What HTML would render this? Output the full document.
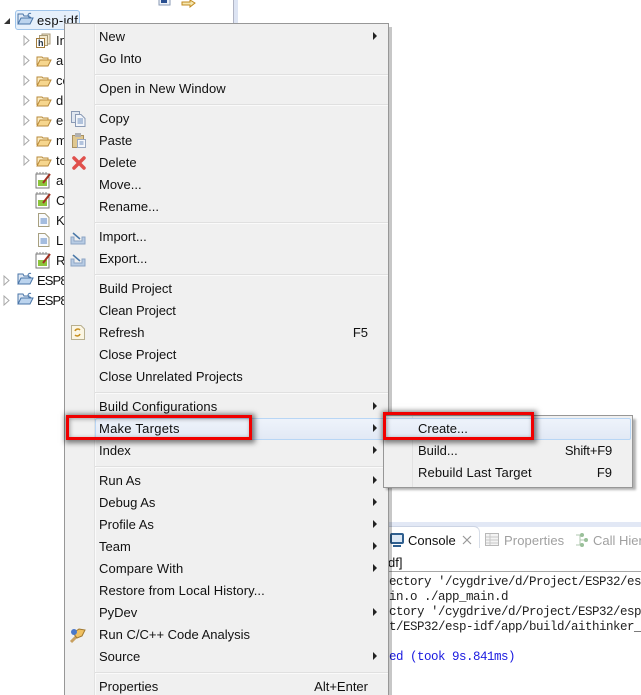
<!DOCTYPE html>
<html><head><meta charset="utf-8"><style>
html,body{margin:0;padding:0;background:#fff}
#p{position:relative;width:641px;height:695px;overflow:hidden;background:#fff;font-family:"Liberation Sans",sans-serif;font-size:13px;color:#111}
#p div,#p svg{position:absolute}
.t{white-space:nowrap;line-height:16px;height:16px;margin-top:1px}
.m{left:99px}
.s{left:95px;width:293px;height:1px;background:#e0e0e0;border-bottom:1px solid #fafafa}
.a{left:373px;width:0;height:0;border-left:4px solid #222;border-top:4px solid transparent;border-bottom:4px solid transparent}
.k{white-space:nowrap;line-height:16px;height:16px;text-align:right;margin-top:1px}
.r{border:3px solid #f00000;box-shadow:1px 1px 5px 2px rgba(0,0,0,.5),inset 1px 1px 4px rgba(0,0,0,.35);box-sizing:border-box}
.c{font-family:"Liberation Mono",monospace;font-size:12.5px;letter-spacing:-.5px;line-height:15px;white-space:nowrap;color:#222}
</style></head><body><div id="p">

<div style="left:233px;top:0;width:1px;height:24px;background:#b0b4c4"></div>
<div style="left:234px;top:0;width:4px;height:24px;background:#dde4f3"></div>

<svg style="left:158px;top:0" width="14" height="6"><path d="M1 0V5H12V0" fill="#eef2f8" stroke="#8a9ab5"/><rect x="3" y="0" width="6" height="3" fill="#2a4f90"/></svg>
<svg style="left:181px;top:0" width="16" height="8"><path d="M1 2H9V0L14 3 9 7V5H1Z" fill="#f5e7b0" stroke="#c08a20"/></svg>

<div style="left:15px;top:10px;width:65px;height:20px;box-sizing:border-box;border:1px solid #9fc4ea;border-radius:3px;background:#e6f0fb"></div>
<svg style="left:3px;top:17px" width="8" height="8"><path d="M1 7H7V1Z" fill="#333"/></svg>
<svg style="left:17px;top:11px" width="17" height="15"><path d="M1 13V3H6L7 5H12V7" fill="#dfe8f4" stroke="#4a76a8"/><path d="M1 13L4 7H16L13 13Z" fill="#bcd4ee" stroke="#4a76a8"/><path d="M14 2.500A2 2 0 1 0 14 6" fill="none" stroke="#4a76a8"/></svg>
<div class="t" style="left:37px;top:12px;letter-spacing:.3px">esp-idf</div>

<svg style="left:23px;top:35px" width="7" height="11"><path d="M1 1L6 5.500 1 10Z" fill="#fff" stroke="#a8a8a8"/></svg>
<svg style="left:36px;top:33px" width="16" height="15"><rect x="6" y="1" width="8" height="10" fill="#f3e8cd" stroke="#a89a78"/><rect x="3.500" y="2.500" width="8" height="10" fill="#f3e8cd" stroke="#a89a78"/><rect x="0.500" y="5.500" width="8" height="9" fill="#fff" stroke="#a07a3a"/><text x="2" y="13" font-size="9" font-weight="bold" font-family="Liberation Sans" fill="#234">h</text></svg>
<div class="t" style="left:56px;top:32px">In</div>

<svg style="left:23px;top:55px" width="7" height="11"><path d="M1 1L6 5.500 1 10Z" fill="#fff" stroke="#a8a8a8"/></svg>
<svg style="left:36px;top:55px" width="16" height="12"><path d="M1 10V2H6L7 3H12V5" fill="#fbeec8" stroke="#b98a3a"/><path d="M1 11L4 5H15L12 11Z" fill="#f6d68e" stroke="#b98a3a"/></svg>
<div class="t" style="left:56px;top:52px">a</div>
<svg style="left:23px;top:75px" width="7" height="11"><path d="M1 1L6 5.500 1 10Z" fill="#fff" stroke="#a8a8a8"/></svg>
<svg style="left:36px;top:75px" width="16" height="12"><path d="M1 10V2H6L7 3H12V5" fill="#fbeec8" stroke="#b98a3a"/><path d="M1 11L4 5H15L12 11Z" fill="#f6d68e" stroke="#b98a3a"/></svg>
<div class="t" style="left:56px;top:72px">co</div>
<svg style="left:23px;top:95px" width="7" height="11"><path d="M1 1L6 5.500 1 10Z" fill="#fff" stroke="#a8a8a8"/></svg>
<svg style="left:36px;top:95px" width="16" height="12"><path d="M1 10V2H6L7 3H12V5" fill="#fbeec8" stroke="#b98a3a"/><path d="M1 11L4 5H15L12 11Z" fill="#f6d68e" stroke="#b98a3a"/></svg>
<div class="t" style="left:56px;top:92px">d</div>
<svg style="left:23px;top:115px" width="7" height="11"><path d="M1 1L6 5.500 1 10Z" fill="#fff" stroke="#a8a8a8"/></svg>
<svg style="left:36px;top:115px" width="16" height="12"><path d="M1 10V2H6L7 3H12V5" fill="#fbeec8" stroke="#b98a3a"/><path d="M1 11L4 5H15L12 11Z" fill="#f6d68e" stroke="#b98a3a"/></svg>
<div class="t" style="left:56px;top:112px">e</div>
<svg style="left:23px;top:135px" width="7" height="11"><path d="M1 1L6 5.500 1 10Z" fill="#fff" stroke="#a8a8a8"/></svg>
<svg style="left:36px;top:135px" width="16" height="12"><path d="M1 10V2H6L7 3H12V5" fill="#fbeec8" stroke="#b98a3a"/><path d="M1 11L4 5H15L12 11Z" fill="#f6d68e" stroke="#b98a3a"/></svg>
<div class="t" style="left:56px;top:132px">m</div>
<svg style="left:23px;top:155px" width="7" height="11"><path d="M1 1L6 5.500 1 10Z" fill="#fff" stroke="#a8a8a8"/></svg>
<svg style="left:36px;top:155px" width="16" height="12"><path d="M1 10V2H6L7 3H12V5" fill="#fbeec8" stroke="#b98a3a"/><path d="M1 11L4 5H15L12 11Z" fill="#f6d68e" stroke="#b98a3a"/></svg>
<div class="t" style="left:56px;top:152px">to</div>

<svg style="left:35px;top:172px" width="17" height="17"><rect x="1" y="2" width="13" height="14" fill="#fff" stroke="#777"/><path d="M2 2V0M5 2V0M8 2V0M11 2V0" stroke="#888"/><rect x="3" y="8" width="9" height="6" fill="#8cc43c"/><path d="M8 11L15 2" stroke="#a03020" stroke-width="2"/></svg>
<div class="t" style="left:56px;top:172px">a</div>
<svg style="left:35px;top:192px" width="17" height="17"><rect x="1" y="2" width="13" height="14" fill="#fff" stroke="#777"/><path d="M2 2V0M5 2V0M8 2V0M11 2V0" stroke="#888"/><rect x="3" y="8" width="9" height="6" fill="#8cc43c"/><path d="M8 11L15 2" stroke="#a03020" stroke-width="2"/></svg>
<div class="t" style="left:56px;top:192px">C</div>
<svg style="left:38px;top:213px" width="12" height="14"><path d="M.5.500H7L11 4.500V13.500H.5Z" fill="#f8fafd" stroke="#a8a080"/><path d="M2.500 6H9M2.500 8H9M2.500 10H9" stroke="#4f7fc0"/></svg>
<div class="t" style="left:56px;top:212px">K</div>
<svg style="left:38px;top:233px" width="12" height="14"><path d="M.5.500H7L11 4.500V13.500H.5Z" fill="#f8fafd" stroke="#a8a080"/><path d="M2.500 6H9M2.500 8H9M2.500 10H9" stroke="#4f7fc0"/></svg>
<div class="t" style="left:56px;top:232px">LI</div>
<svg style="left:35px;top:252px" width="17" height="17"><rect x="1" y="2" width="13" height="14" fill="#fff" stroke="#777"/><path d="M2 2V0M5 2V0M8 2V0M11 2V0" stroke="#888"/><rect x="3" y="8" width="9" height="6" fill="#8cc43c"/><path d="M8 11L15 2" stroke="#a03020" stroke-width="2"/></svg>
<div class="t" style="left:56px;top:252px">R</div>

<svg style="left:3px;top:275px" width="7" height="11"><path d="M1 1L6 5.500 1 10Z" fill="#fff" stroke="#a8a8a8"/></svg>
<svg style="left:17px;top:271px" width="17" height="15"><path d="M1 13V3H6L7 5H12V7" fill="#dfe8f4" stroke="#4a76a8"/><path d="M1 13L4 7H16L13 13Z" fill="#bcd4ee" stroke="#4a76a8"/><path d="M14 2.500A2 2 0 1 0 14 6" fill="none" stroke="#4a76a8"/></svg>
<div class="t" style="left:37px;top:272px;letter-spacing:-.9px">ESP8</div>
<svg style="left:3px;top:295px" width="7" height="11"><path d="M1 1L6 5.500 1 10Z" fill="#fff" stroke="#a8a8a8"/></svg>
<svg style="left:17px;top:291px" width="17" height="15"><path d="M1 13V3H6L7 5H12V7" fill="#dfe8f4" stroke="#4a76a8"/><path d="M1 13L4 7H16L13 13Z" fill="#bcd4ee" stroke="#4a76a8"/><path d="M14 2.500A2 2 0 1 0 14 6" fill="none" stroke="#4a76a8"/></svg>
<div class="t" style="left:37px;top:292px;letter-spacing:-.9px">ESP8</div>

<!-- console -->
<div style="left:388px;top:522px;width:253px;height:5px;background:#e2e8f5"></div>
<div style="left:388px;top:526px;width:92px;height:22px;background:#fff;border-top-right-radius:6px;box-sizing:border-box;border-top:1px solid #ccd4e4;border-right:1px solid #d8dee8"></div>
<svg style="left:390px;top:533px" width="14" height="14"><rect x="1" y="1" width="12" height="9" rx="1" fill="#dce8f5" stroke="#2f5f8f" stroke-width="2"/><path d="M3 13H11" stroke="#2f5f8f" stroke-width="2"/></svg>
<div class="t" style="left:408px;top:532px">Console</div>
<svg style="left:462px;top:535px" width="10" height="10"><path d="M1 1L9 9M9 1L1 9" stroke="#999" stroke-width="1.200" fill="none"/></svg>
<svg style="left:485px;top:533px" width="14" height="13"><rect x=".5" y=".5" width="13" height="12" fill="#f4f4f4" stroke="#b8b8b8"/><path d="M1 4H13M1 7H13M1 10H13M5 1V12" stroke="#c8c8c8"/></svg>
<div class="t" style="left:504px;top:532px;color:#a0a0a0;letter-spacing:.1px">Properties</div>
<svg style="left:573px;top:532px" width="16" height="16"><path d="M3 3H9M3 13H9M7 3V13M7 8H13" stroke="#b0c8b0" fill="none"/><circle cx="13" cy="8" r="2" fill="#9ac09a"/><circle cx="9" cy="3" r="2" fill="#9ac09a"/><circle cx="9" cy="13" r="2" fill="#9ac09a"/></svg>
<div class="t" style="left:593px;top:532px;color:#a0a0a0">Call Hier</div>
<div class="t" style="left:388px;top:554px;color:#111">df]</div>
<div style="left:388px;top:571px;width:253px;height:1px;background:#a8a8a8"></div>
<div class="c" style="left:389px;top:575px">ectory '/cygdrive/d/Project/ESP32/esp</div>
<div class="c" style="left:389px;top:590px">in.o ./app_main.d</div>
<div class="c" style="left:389px;top:605px">ctory '/cygdrive/d/Project/ESP32/esp</div>
<div class="c" style="left:389px;top:620px">t/ESP32/esp-idf/app/build/aithinker_</div>
<div class="c" style="left:389px;top:650px;color:#1a1ae0">ed (took 9s.841ms)</div>

<!-- main menu -->
<div style="left:389px;top:27px;width:3px;height:668px;background:rgba(0,0,0,.22)"></div>
<div style="left:64px;top:23px;width:325px;height:672px;box-sizing:border-box;border:1px solid #979797;border-bottom:0;background:#f0f0f0"></div>
<div style="left:94px;top:24px;width:1px;height:671px;background:#e2e2e2"></div>
<div style="left:95px;top:24px;width:1px;height:671px;background:#fafafa"></div>

<div class="t m" style="top:28px">New</div><div class="a" style="top:32px"></div>
<div class="t m" style="top:50px">Go Into</div>
<div class="s" style="top:74px"></div>
<div class="t m" style="top:80px;letter-spacing:.1px">Open in New Window</div>
<div class="s" style="top:104px"></div>
<svg style="left:71px;top:111px" width="15" height="16"><rect x=".5" y=".5" width="8" height="11" fill="#dfe6f0" stroke="#8a9ab5"/><path d="M4.500 3.500H10L14 7.500V15.500H4.500Z" fill="#f2f5fa" stroke="#8a9ab5"/><path d="M6.500 8H12M6.500 10H12M6.500 12H12" stroke="#6f8fbf"/></svg>
<div class="t m" style="top:110px">Copy</div>
<svg style="left:72px;top:133px" width="14" height="15"><rect x=".5" y="2.500" width="11" height="12" fill="#e0c890" stroke="#a89060"/><rect x="3" y="0" width="6" height="4" fill="#b0b0b0"/><path d="M5.500 6.500H13.500V14.500H5.500Z" fill="#f5f7fb" stroke="#9aa8c0"/><path d="M7.500 9H11.500M7.500 11H11.500" stroke="#6f8fbf"/></svg>
<div class="t m" style="top:132px">Paste</div>
<svg style="left:72px;top:156px" width="14" height="14"><path d="M2 2L12 12M12 2L2 12" stroke="#e0504c" stroke-width="3.500" stroke-linecap="round"/></svg>
<div class="t m" style="top:154px">Delete</div>
<div class="t m" style="top:176px">Move...</div>
<div class="t m" style="top:198px">Rename...</div>
<div class="s" style="top:222px"></div>
<svg style="left:70px;top:232px" width="16" height="13"><path d="M1 5H4V9H12V5H15V12H1Z" fill="#b8cce4" stroke="#8ca4c4"/><path d="M3 1L10 7" stroke="#4a78a8" stroke-width="1.500"/></svg>
<div class="t m" style="top:228px">Import...</div>
<svg style="left:70px;top:254px" width="16" height="13"><path d="M1 5H4V9H12V5H15V12H1Z" fill="#b8cce4" stroke="#8ca4c4"/><path d="M3 1L10 7" stroke="#4a78a8" stroke-width="1.500"/></svg>
<div class="t m" style="top:250px">Export...</div>
<div class="s" style="top:274px"></div>
<div class="t m" style="top:280px">Build Project</div>
<div class="t m" style="top:302px;letter-spacing:-.1px">Clean Project</div>
<svg style="left:71px;top:325px" width="14" height="15"><path d="M.5.500H10L13.500 4V14.500H.5Z" fill="#fbf6e4" stroke="#b8b090"/><path d="M4 6A3 3 0 0 1 9 5M9 9A3 3 0 0 1 4 10" fill="none" stroke="#c89020" stroke-width="1.500"/></svg>
<div class="t m" style="top:324px">Refresh</div><div class="k" style="left:340px;width:28px;top:324px">F5</div>
<div class="t m" style="top:346px">Close Project</div>
<div class="t m" style="top:368px">Close Unrelated Projects</div>
<div class="s" style="top:392px"></div>
<div class="t m" style="top:398px;letter-spacing:.1px">Build Configurations</div><div class="a" style="top:402px"></div>
<div style="left:95px;top:418px;width:292px;height:22px;box-sizing:border-box;border:1px solid #b8d6f5;border-radius:2px;background:linear-gradient(#eef3fb,#e2e9f5)"></div>
<div class="t m" style="top:420px;letter-spacing:.25px">Make Targets</div><div class="a" style="top:424px"></div>
<div class="t m" style="top:442px">Index</div><div class="a" style="top:446px"></div>
<div class="s" style="top:466px"></div>
<div class="t m" style="top:472px">Run As</div><div class="a" style="top:476px"></div>
<div class="t m" style="top:494px">Debug As</div><div class="a" style="top:498px"></div>
<div class="t m" style="top:516px">Profile As</div><div class="a" style="top:520px"></div>
<div class="t m" style="top:538px">Team</div><div class="a" style="top:542px"></div>
<div class="t m" style="top:560px;letter-spacing:.1px">Compare With</div><div class="a" style="top:564px"></div>
<div class="t m" style="top:582px;letter-spacing:.07px">Restore from Local History...</div>
<div class="t m" style="top:604px">PyDev</div><div class="a" style="top:608px"></div>
<svg style="left:69px;top:627px" width="18" height="17"><path d="M2 15L9 8" stroke="#c8a060" stroke-width="3"/><path d="M4 6L10 2 16 3 13 9 8 11Z" fill="#f0c060" stroke="#a07830"/><circle cx="5" cy="5" r="3" fill="#4a78c8"/></svg>
<div class="t m" style="top:626px">Run C/C++ Code Analysis</div>
<div class="t m" style="top:648px">Source</div><div class="a" style="top:652px"></div>
<div class="s" style="top:672px"></div>
<div class="t m" style="top:678px">Properties</div><div class="k" style="left:300px;width:68px;top:678px">Alt+Enter</div>

<!-- submenu -->
<div style="left:386px;top:419px;width:250px;height:71px;background:rgba(0,0,0,.3);filter:blur(1px)"></div>
<div style="left:383px;top:415px;width:250px;height:73px;box-sizing:border-box;border:1px solid #979797;background:#f0f0f0"></div>
<div style="left:412px;top:416px;width:1px;height:71px;background:#e2e2e2"></div>
<div style="left:385px;top:418px;width:246px;height:22px;box-sizing:border-box;border:1px solid #b8d6f5;border-radius:2px;background:linear-gradient(#eef3fb,#e2e9f5)"></div>
<div class="t" style="left:418px;top:420px">Create...</div>
<div class="t" style="left:418px;top:442px">Build...</div><div class="k" style="left:552px;width:60px;top:442px;letter-spacing:-.2px">Shift+F9</div>
<div class="t" style="left:418px;top:464px;letter-spacing:.1px">Rebuild Last Target</div><div class="k" style="left:572px;width:40px;top:464px">F9</div>

<!-- red boxes -->
<div class="r" style="left:66px;top:415px;width:186px;height:25px"></div>
<div class="r" style="left:383px;top:412px;width:151px;height:28px"></div>
</div></body></html>
